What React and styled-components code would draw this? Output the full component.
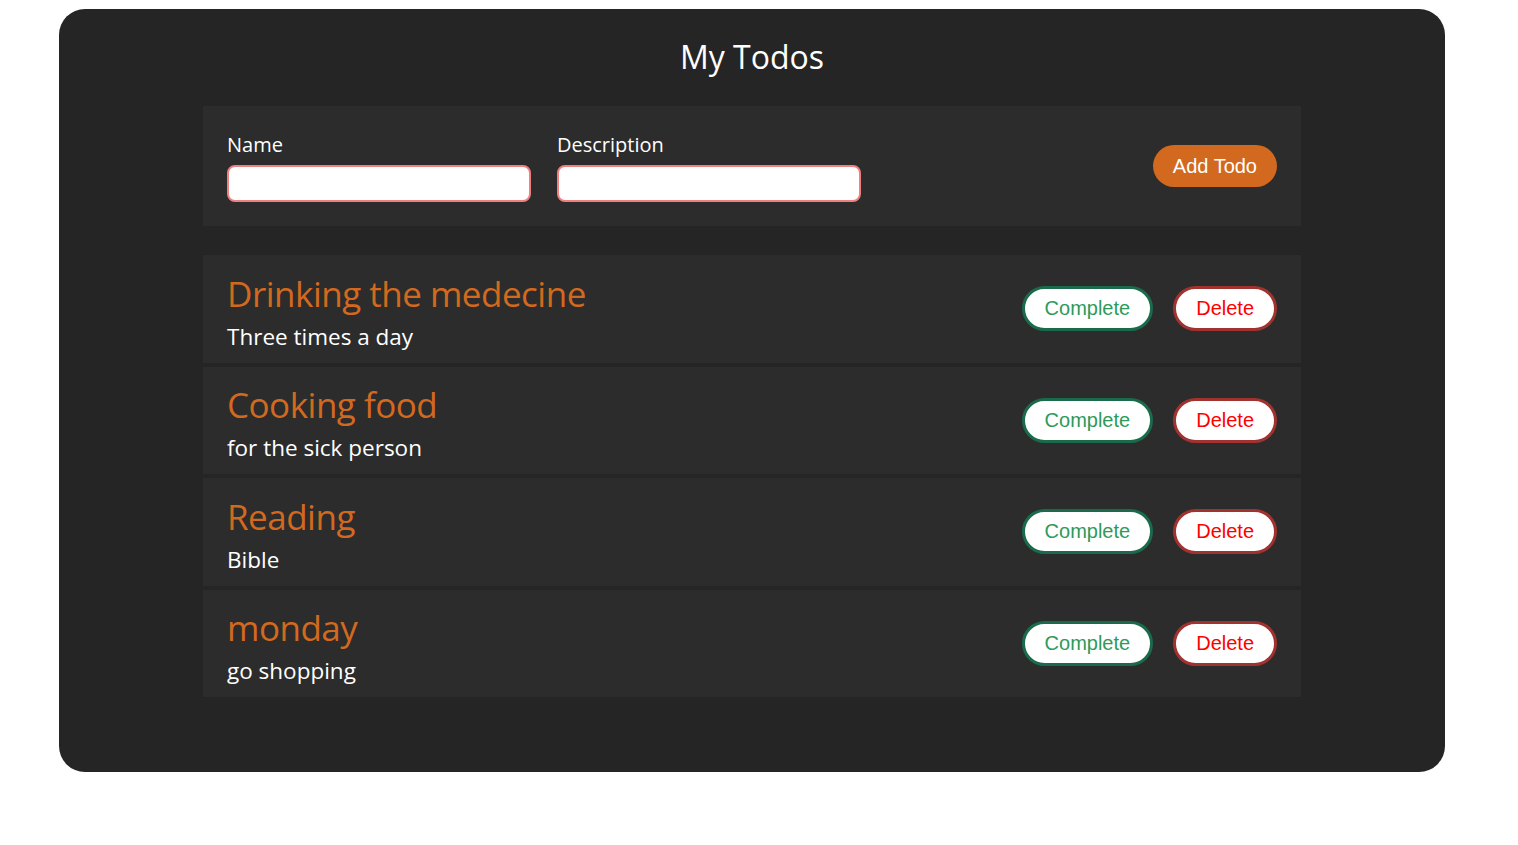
import React from 'react';
import styled, { createGlobalStyle } from 'styled-components';

const GlobalStyle = createGlobalStyle`
  body {
    margin: 0;
    background: #ffffff;
    font-family: "Open Sans", "Noto Sans", sans-serif;
  }
`;

const Page = styled.div`
  padding: 9px 73px 73px 59px;
`;

const Card = styled.main`
  background: #252525;
  border-radius: 26px;
  padding: 29px 144px 75px;
  color: #ffffff;
`;

const Title = styled.h1`
  margin: 0 0 30px;
  font-size: 32px;
  font-weight: 400;
  line-height: 38px;
  text-align: center;
`;

const FormBox = styled.form`
  display: flex;
  align-items: center;
  gap: 26px;
  background: #2c2c2c;
  padding: 24px;
  margin-bottom: 29px;
`;

const Field = styled.label`
  display: flex;
  flex-direction: column;
  gap: 5px;
  font-size: 20px;
  line-height: 30px;
`;

const Input = styled.input`
  box-sizing: border-box;
  width: 304px;
  height: 37px;
  border: 2px solid #f08080;
  border-radius: 8px;
  background: #fff;
  outline: none;
`;

const AddButton = styled.button`
  margin-left: auto;
  height: 42px;
  padding: 0 20px;
  border: none;
  border-radius: 21px;
  background: #d2691e;
  color: #fff;
  font-family: "Liberation Sans", Arial, sans-serif;
  font-size: 20px;
`;

const List = styled.ul`
  list-style: none;
  margin: 0;
  padding: 0;
  display: flex;
  flex-direction: column;
  gap: 4px;
`;

const Item = styled.li`
  display: flex;
  align-items: center;
  justify-content: space-between;
  height: 107.5px;
  box-sizing: border-box;
  padding: 0 24px;
  background: #2c2c2c;
`;

const ItemText = styled.div`
  display: flex;
  flex-direction: column;
  gap: 6px;
  padding-top: 6px;
`;

const ItemName = styled.h3`
  margin: 0;
  font-size: 35px;
  font-weight: 400;
  letter-spacing: -0.5px;
  line-height: 44px;
  color: #d2691e;
`;

const ItemDesc = styled.p`
  margin: 0;
  font-size: 22.5px;
  line-height: 30px;
`;

const Actions = styled.div`
  display: flex;
  gap: 20px;
`;

const PillButton = styled.button`
  height: 45px;
  padding: 0 20px;
  border: 3px solid ${({ $border }) => $border};
  border-radius: 23px;
  background: #fff;
  color: ${({ $color }) => $color};
  font-family: "Liberation Sans", Arial, sans-serif;
  font-size: 20px;
`;

const todos = [
  { name: 'Drinking the medecine', description: 'Three times a day' },
  { name: 'Cooking food', description: 'for the sick person' },
  { name: 'Reading', description: 'Bible' },
  { name: 'monday', description: 'go shopping' },
];

export default function App() {
  return (
    <>
      <GlobalStyle />
      <Page>
        <Card>
          <Title>My Todos</Title>
          <FormBox onSubmit={(e) => e.preventDefault()}>
            <Field>
              Name
              <Input type="text" />
            </Field>
            <Field>
              Description
              <Input type="text" />
            </Field>
            <AddButton type="submit">Add Todo</AddButton>
          </FormBox>
          <List>
            {todos.map((todo) => (
              <Item key={todo.name}>
                <ItemText>
                  <ItemName>{todo.name}</ItemName>
                  <ItemDesc>{todo.description}</ItemDesc>
                </ItemText>
                <Actions>
                  <PillButton $border="#1a6b4b" $color="#2e9a5a">Complete</PillButton>
                  <PillButton $border="#a0322f" $color="#ff0000">Delete</PillButton>
                </Actions>
              </Item>
            ))}
          </List>
        </Card>
      </Page>
    </>
  );
}
